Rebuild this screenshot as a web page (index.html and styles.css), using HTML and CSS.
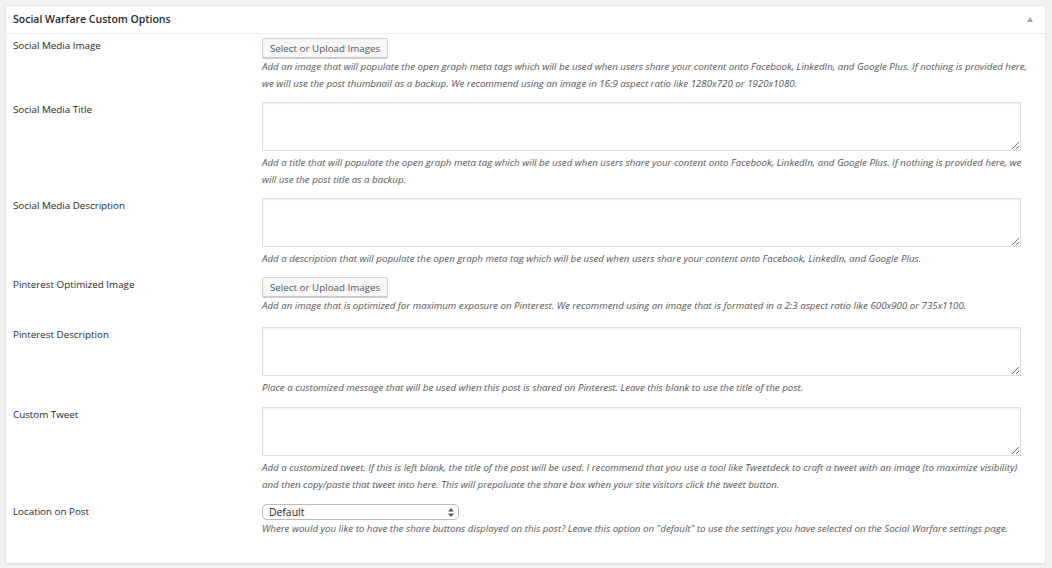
FILE: index.html
```html
<!DOCTYPE html>
<html lang="en">
<head>
    <meta charset="UTF-8">
    <meta name="viewport" content="width=device-width, initial-scale=1.0">
    <title>Social Warfare Custom Options</title>
    <link rel="stylesheet" href="styles.css">
</head>
<body>
    <div class="postbox">
        <div class="postbox-header">
            <h2>Social Warfare Custom Options</h2>
            <span class="toggle-arrow"></span>
        </div>
        <div class="postbox-inside">
            <div class="field-row">
                <label class="field-label">Social Media Image</label>
                <div class="field">
                    <button class="upload-btn">Select or Upload Images</button>
                    <p class="description">Add an image that will populate the open graph meta tags which will be used when users share your content onto Facebook, LinkedIn, and Google Plus. If nothing is provided here, we will use the post thumbnail as a backup. We recommend using an image in 16:9 aspect ratio like 1280x720 or 1920x1080.</p>
                </div>
            </div>

            <div class="field-row">
                <label class="field-label">Social Media Title</label>
                <div class="field">
                    <textarea></textarea>
                    <p class="description">Add a title that will populate the open graph meta tag which will be used when users share your content onto Facebook, LinkedIn, and Google Plus. If nothing is provided here, we will use the post title as a backup.</p>
                </div>
            </div>

            <div class="field-row">
                <label class="field-label">Social Media Description</label>
                <div class="field">
                    <textarea></textarea>
                    <p class="description">Add a description that will populate the open graph meta tag which will be used when users share your content onto Facebook, LinkedIn, and Google Plus.</p>
                </div>
            </div>

            <div class="field-row field-row-wide">
                <label class="field-label">Pinterest Optimized Image</label>
                <div class="field">
                    <button class="upload-btn">Select or Upload Images</button>
                    <p class="description">Add an image that is optimized for maximum exposure on Pinterest. We recommend using an image that is formated in a 2:3 aspect ratio like 600x900 or 735x1100.</p>
                </div>
            </div>

            <div class="field-row">
                <label class="field-label">Pinterest Description</label>
                <div class="field">
                    <textarea></textarea>
                    <p class="description">Place a customized message that will be used when this post is shared on Pinterest. Leave this blank to use the title of the post.</p>
                </div>
            </div>

            <div class="field-row field-row-loose">
                <label class="field-label">Custom Tweet</label>
                <div class="field">
                    <textarea></textarea>
                    <p class="description">Add a customized tweet. If this is left blank, the title of the post will be used. I recommend that you use a tool like Tweetdeck to craft a tweet with an image (to maximize visibility) and then copy/paste that tweet into here. This will prepoluate the share box when your site visitors click the tweet button.</p>
                </div>
            </div>

            <div class="field-row">
                <label class="field-label">Location on Post</label>
                <div class="field">
                    <div class="select-wrap">
                        <select>
                            <option>Default</option>
                        </select>
                        <svg class="select-arrows" width="6" height="9" viewBox="0 0 6 9">
                            <path d="M3 0 L6 3.5 H0 Z M3 9 L6 5.5 H0 Z" fill="#555"/>
                        </svg>
                    </div>
                    <p class="description">Where would you like to have the share buttons displayed on this post? Leave this option on "default" to use the settings you have selected on the Social Warfare settings page.</p>
                </div>
            </div>
        </div>
    </div>
</body>
</html>
```

FILE: styles.css
```css
body {
    font-family: "Open Sans", "Noto Sans", sans-serif;
    background-color: #f1f1f1;
    color: #32373c;
    margin: 0;
    padding: 5px 6px 5px 5px;
}
.postbox {
    background-color: #fff;
    border: 1px solid #e5e5e5;
    box-shadow: 0 1px 1px rgba(0, 0, 0, 0.04);
}
.postbox-header {
    display: flex;
    justify-content: space-between;
    align-items: center;
    height: 27px;
    padding: 0 12px 0 7px;
    border-bottom: 1px solid #eee;
}
.postbox-header h2 {
    margin: -2px 0 0;
    font-size: 10.5px;
    font-weight: 600;
    color: #23282d;
}
.toggle-arrow {
    width: 0;
    height: 0;
    border-left: 3px solid transparent;
    border-right: 3px solid transparent;
    border-bottom: 5px solid #a0a5aa;
}
.postbox-inside {
    padding: 0 0 20px;
}
.field-row {
    display: flex;
    padding: 4px 0 6px;
}
.field-row-wide {
    padding-bottom: 9px;
}
.field-row-loose {
    padding-top: 5px;
    padding-bottom: 7px;
}
.field-label {
    width: 249px;
    padding: 1px 0 0 7px;
    font-size: 9.8px;
    line-height: 14px;
    color: #23282d;
}
.field {
    width: 768px;
}
.upload-btn {
    display: block;
    height: 20px;
    padding: 0 7px;
    font-family: "Open Sans", "Noto Sans", sans-serif;
    font-size: 9.8px;
    color: #555;
    background-color: #f7f7f7;
    border: 1px solid #ccc;
    border-radius: 2px;
    box-shadow: 0 1px 0 #ccc;
}
textarea {
    display: block;
    box-sizing: border-box;
    width: 759px;
    height: 49px;
    margin: 0 0 3px;
    border: 1px solid #ddd;
    box-shadow: inset 0 1px 2px rgba(0, 0, 0, 0.07);
}
.description {
    margin: 0;
    font-size: 9.72px;
    font-style: italic;
    line-height: 17px;
    color: #555;
}
.select-wrap {
    position: relative;
    width: 197px;
}
.select-wrap select {
    appearance: none;
    -webkit-appearance: none;
    display: block;
    width: 197px;
    height: 16px;
    padding: 0 0 0 6px;
    font-family: "Open Sans", "Noto Sans", sans-serif;
    font-size: 10.4px;
    color: #222;
    background-color: #fff;
    border: 1px solid #bbb;
    border-radius: 5px;
}
.select-arrows {
    position: absolute;
    right: 5px;
    top: 4px;
}
```
